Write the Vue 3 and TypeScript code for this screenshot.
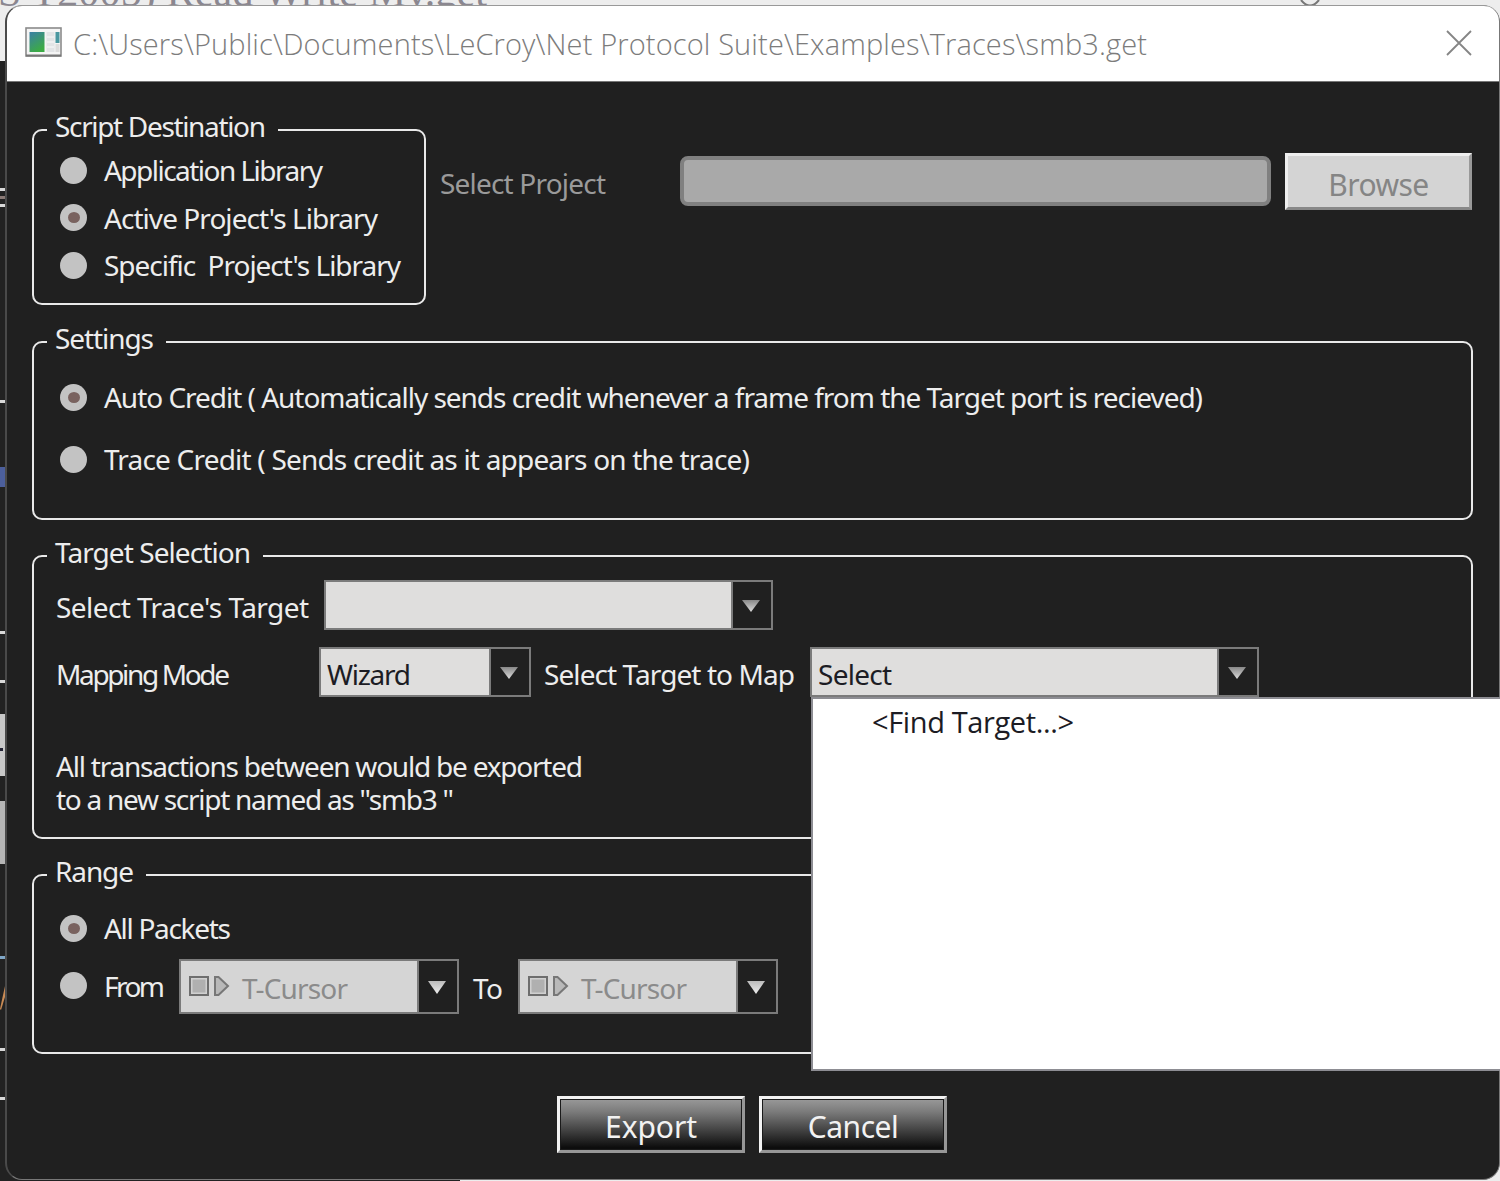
<script setup lang="ts">
import {ref, Ref} from "vue";

const title = 'C:\\Users\\Public\\Documents\\LeCroy\\Net Protocol Suite\\Examples\\Traces\\smb3.get'

const destinations = [
  {id: 'app', label: 'Application Library', width: 219},
  {id: 'active', label: "Active Project's Library", width: 274},
  {id: 'specific', label: "Specific  Project's Library", width: 297},
]

const credits = [
  {id: 'auto', label: 'Auto Credit ( Automatically sends credit whenever a frame from the Target port is recieved)', width: 1099},
  {id: 'trace', label: 'Trace Credit ( Sends credit as it appears on the trace)', width: 646},
]

const destination: Ref<string> = ref('active')
const credit: Ref<string> = ref('auto')
const range: Ref<string> = ref('all')

// spreads or tightens the letters until the text takes the given width
const vFit = {
  mounted(el: HTMLElement, binding: { value: number }) {
    const count = (el.textContent || '').length - 1
    const natural = el.getBoundingClientRect().width
    el.style.letterSpacing = (binding.value - natural) / count + 'px'
  }
}
</script>

<template>
  <div class="screen">
    <svg class="backdrop" width="1500" height="1181" viewBox="0 0 1500 1181">
      <rect width="1500" height="1181" fill="#ededed"/>
      <rect y="61" width="40" height="1120" fill="#222"/>
      <rect y="1150" width="460" height="31" fill="#222"/>
      <text x="-2" y="6" class="behind-title" textLength="489">S T2005) Read Write Mv.get</text>
      <path d="M1301 0 Q1310 11 1319 0" fill="none" stroke="#777" stroke-width="2"/>
      <g fill="#d8d8d8">
        <rect y="188" width="5" height="3"/>
        <rect y="196" width="5" height="3" fill="#8a7a76"/>
        <rect y="204" width="5" height="3"/>
        <rect y="400" width="5" height="3"/>
        <rect y="467" width="5" height="20" fill="#4c5f9c"/>
        <rect y="631" width="5" height="3"/>
        <rect y="680" width="5" height="3"/>
        <rect y="714" width="5" height="62" fill="#c8c8c8"/>
        <rect y="748" width="3" height="3" fill="#223"/>
        <rect y="801" width="5" height="63" fill="#b5b5b5"/>
        <rect y="956" width="5" height="3" fill="#7fa6c6"/>
        <path d="M0 1009 L5 986 V997 L1 1010 Z" fill="#c98b55"/>
        <rect y="1048" width="5" height="3"/>
        <rect y="1097" width="5" height="3"/>
      </g>
    </svg>

    <div class="dialog">
      <header class="titlebar">
        <svg class="app-icon" width="37" height="30" viewBox="0 0 37 30">
          <defs>
            <linearGradient id="pane" x1="0" y1="0" x2="0.5" y2="1">
              <stop offset="0" stop-color="#3a7fa6"/>
              <stop offset="1" stop-color="#3cab45"/>
            </linearGradient>
          </defs>
          <rect x="1" y="1" width="35" height="28" fill="#f5f5f5" stroke="#8b8b8b" stroke-width="1.6"/>
          <path d="M1 28.5 H36" stroke="#777" stroke-width="2"/>
          <rect x="4.500" y="5" width="15" height="20" fill="url(#pane)"/>
          <rect x="21.500" y="5" width="8" height="20" fill="#e2e4e6"/>
          <path d="M22 10 H29 M22 15 H29 M22 20 H29" stroke="#fafafa"/>
          <rect x="30.500" y="5" width="4" height="11" fill="#4a97a0"/>
          <rect x="30.500" y="17" width="4" height="8" fill="#dcdcdc"/>
        </svg>
        <span class="title"><span v-fit="1074" class="text">{{ title }}</span></span>
        <svg class="close" width="26" height="26" viewBox="0 0 26 26">
          <path d="M1 1 L25 25 M25 1 L1 25" stroke="#858585" stroke-width="1.8"/>
        </svg>
      </header>

      <main class="content">
        <div class="top-row">
          <fieldset class="group destination">
            <legend><span v-fit="211" class="text">Script Destination</span></legend>
            <label v-for="item in destinations" :key="item.id" class="option" @click="destination = item.id">
              <i class="radio" :class="{checked: destination === item.id}"></i>
              <span v-fit="item.width" class="text">{{ item.label }}</span>
            </label>
          </fieldset>
          <div class="project">
            <span class="project-label"><span v-fit="166" class="text">Select Project</span></span>
            <div class="project-field"></div>
            <button class="button disabled"><span v-fit="101" class="text">Browse</span></button>
          </div>
        </div>

        <fieldset class="group settings">
          <legend><span v-fit="99" class="text">Settings</span></legend>
          <label v-for="item in credits" :key="item.id" class="option" @click="credit = item.id">
            <i class="radio" :class="{checked: credit === item.id}"></i>
            <span v-fit="item.width" class="text">{{ item.label }}</span>
          </label>
        </fieldset>

        <fieldset class="group target">
          <legend><span v-fit="196" class="text">Target Selection</span></legend>
          <div class="row">
            <span class="name trace"><span v-fit="253" class="text">Select Trace's Target</span></span>
            <div class="combo wide">
              <div class="value"></div>
              <div class="arrow"></div>
            </div>
          </div>
          <div class="row mapping">
            <span class="name mode"><span v-fit="174" class="text">Mapping Mode</span></span>
            <div class="combo wizard">
              <div class="value"><span v-fit="84" class="text">Wizard</span></div>
              <div class="arrow"></div>
            </div>
            <span class="name map"><span v-fit="251" class="text">Select Target to Map</span></span>
            <div class="combo wide">
              <div class="value"><span v-fit="74" class="text">Select</span></div>
              <div class="arrow"></div>
              <div class="popup"><span v-fit="202" class="text">&lt;Find Target...&gt;</span></div>
            </div>
          </div>
          <div class="note">
            <div v-fit="527" class="text">All transactions between would be exported</div>
            <div v-fit="398" class="text">to a new script named as "smb3 "</div>
          </div>
        </fieldset>

        <fieldset class="group range">
          <legend><span v-fit="79" class="text">Range</span></legend>
          <label class="option" @click="range = 'all'">
            <i class="radio" :class="{checked: range === 'all'}"></i>
            <span v-fit="127" class="text">All Packets</span>
          </label>
          <div class="row">
            <label class="option from" @click="range = 'from'">
              <i class="radio" :class="{checked: range === 'from'}"></i>
              <span v-fit="61" class="text">From</span>
            </label>
            <template v-for="side in ['first', 'last']" :key="side">
              <span v-if="side === 'last'" class="to"><span v-fit="30" class="text">To</span></span>
              <div class="combo cursor" :class="side">
                <div class="value">
                  <svg class="cursor-icon" width="42" height="22" viewBox="0 0 42 22">
                    <rect x="1" y="2" width="18" height="18" fill="#d0d0d0" stroke="#6e6e6e" stroke-width="2"/>
                    <rect x="3.500" y="4.500" width="13" height="13" fill="#b0b0b0"/>
                    <path d="M26 2 H29.500 L39 11 L29.500 20 H26 Z" fill="#b9b9b9" stroke="#777" stroke-width="2"/>
                  </svg>
                  <span v-fit="106" class="text">T-Cursor</span>
                </div>
                <div class="arrow"></div>
              </div>
            </template>
          </div>
        </fieldset>

        <footer class="actions">
          <button class="button"><span v-fit="92" class="text">Export</span></button>
          <button class="button"><span v-fit="91" class="text">Cancel</span></button>
        </footer>
      </main>
    </div>
  </div>
</template>

<style>
body {
  overflow: hidden;
  background: #ededed;
}
</style>

<style scoped>
.screen {
  position: relative;
  box-sizing: border-box;
  width: 1500px;
  height: 1181px;
  padding: 5px 0 0 5px;
  overflow: hidden;
  font-family: "Noto Sans", "Open Sans", sans-serif;
  font-size: 28px;
  font-stretch: 92%;
  line-height: 32px;
  color: #ededed;
}
.backdrop {
  position: absolute;
  left: 0;
  top: 0;
}
.behind-title {
  font-family: "Liberation Serif", serif;
  font-size: 42px;
  fill: #8b8790;
}
.text {
  display: inline-block;
  white-space: pre;
}
.dialog {
  position: relative;
  box-sizing: border-box;
  width: 1495px;
  height: 1175px;
  border: 1px solid #777;
  border-top-color: #999;
  border-left: 2px solid #4a4a4a;
  border-radius: 17px;
  background: #202020;
}
.titlebar {
  display: flex;
  align-items: center;
  box-sizing: border-box;
  height: 76px;
  padding: 0 27px 0 18px;
  border-bottom: 1px solid #777;
  border-radius: 15px 15px 0 0;
  background: #fff;
}
.app-icon {
  margin-bottom: 4px;
}
.title {
  flex: 1;
  margin: 1px 0 0 11px;
  font-family: "Open Sans", "Noto Sans", sans-serif;
  font-weight: 300;
  font-size: 29px;
  color: #7c7c7c;
}
.close {
  margin-bottom: 1px;
}
.content {
  padding: 31px 26px 0 25px;
}
.group {
  box-sizing: border-box;
  min-width: 0;
  margin: 0;
  padding: 0 0 0 22px;
  border: 2px solid #e9e9e9;
  border-radius: 10px;
}
.group legend {
  height: 26px;
  margin-left: -9px;
  padding: 0 13px 8px 8px;
  line-height: 26px;
}
.top-row {
  display: flex;
  height: 192px;
}
.destination {
  width: 394px;
  height: 192px;
}
.option {
  display: flex;
  align-items: center;
  height: 47.5px;
  padding-left: 4px;
}
.destination .option:first-of-type {
  margin-top: -0.5px;
}
.radio {
  flex: none;
  display: flex;
  align-items: center;
  justify-content: center;
  width: 27px;
  height: 27px;
  margin-right: 17px;
  border-radius: 50%;
  background: #c3c3c3;
}
.radio.checked:after {
  content: "";
  width: 12px;
  height: 11px;
  border-radius: 50%;
  background: #79625f;
}
.project {
  display: flex;
  align-items: center;
  flex: 1;
  height: 57px;
  margin-top: 40px;
}
.project-label {
  width: 240px;
  margin-left: 14px;
  padding-top: 2px;
  color: #9a9a9a;
}
.project-field {
  box-sizing: border-box;
  width: 591px;
  height: 50px;
  margin-bottom: 1px;
  border: 4px solid #808080;
  border-radius: 8px;
  background: #a9a9a9;
}
.button {
  display: flex;
  align-items: center;
  justify-content: center;
  box-sizing: border-box;
  width: 188px;
  height: 57px;
  padding: 5px 0 0;
  border: 3px solid;
  border-color: #f2f2f2 #979797 #979797 #f2f2f2;
  background: linear-gradient(#999, #7b7b7b 25%, #0d0d0d 95%);
  box-shadow: inset 0 0 0 1px #1a1a1a;
  font-family: inherit;
  font-size: 30px;
  font-stretch: inherit;
  line-height: 32px;
  color: #f2f2f2;
}
.button.disabled {
  width: 187px;
  margin-left: 14px;
  padding-top: 6px;
  border-color: #eee #999 #888 #eee;
  background: #d4d4d4;
  box-shadow: none;
  color: #858585;
}
.settings {
  height: 195px;
  margin-top: 20px;
}
.settings .option {
  height: 62px;
}
.settings .option:first-of-type {
  margin-top: 7px;
}
.target {
  height: 300px;
  margin-top: 19px;
}
.row {
  display: flex;
  align-items: center;
}
.target .row {
  margin-top: 7px;
}
.target .row.mapping {
  margin-top: 17px;
}
.name {
  padding-top: 3px;
}
.trace {
  width: 268px;
}
.mode {
  width: 263px;
}
.map {
  width: 266px;
  margin-left: 13px;
}
.combo {
  position: relative;
  display: flex;
  box-sizing: border-box;
  height: 50px;
  border: 2px solid #7b7b7b;
  background: #202020;
}
.combo.wide {
  width: 449px;
}
.combo.wizard {
  width: 212px;
}
.combo .value {
  display: flex;
  align-items: center;
  flex: 1;
  padding: 3px 0 0 6px;
  background: #dfdedd;
  color: #1c1c24;
}
.combo .arrow {
  display: flex;
  align-items: center;
  justify-content: center;
  width: 38px;
  border-left: 2px solid #7b7b7b;
}
.combo .arrow:after {
  content: "";
  width: 18px;
  height: 12px;
  margin: 2px 2px 0 0;
  background: linear-gradient(#888, #ddd);
  clip-path: polygon(0 0, 100% 0, 50% 100%);
}
.popup {
  position: absolute;
  left: -1px;
  top: 48px;
  z-index: 2;
  box-sizing: border-box;
  width: 700px;
  height: 374px;
  padding: 7px 0 0 59px;
  border: 2px solid #8d8d93;
  background: #fff;
  font-family: "Open Sans", "Noto Sans", sans-serif;
  font-size: 29px;
  color: #1c1c24;
}
.note {
  display: flex;
  flex-direction: column;
  align-items: flex-start;
  margin-top: 53px;
  line-height: 32.5px;
}
.range {
  height: 196px;
  margin-top: 19px;
}
.range .option {
  height: 40px;
}
.range legend + .option {
  margin-top: 16px;
}
.range .row {
  margin-top: 11px;
}
.option.from {
  width: 119px;
  padding-bottom: 2px;
}
.combo.cursor {
  width: 260px;
  height: 55px;
}
.combo.cursor.first {
  width: 280px;
}
.cursor .value {
  padding: 3px 0 0 8px;
  background: #d5d5d5;
  color: #8b8b8b;
}
.cursor .arrow:after {
  height: 13px;
  background: linear-gradient(#bbb, #eee);
}
.cursor-icon {
  margin: 0 11px 4px 0;
}
.to {
  width: 45px;
  margin-left: 14px;
  padding-top: 3px;
}
.actions {
  display: flex;
  gap: 14px;
  margin: 42px 0 0 525px;
}
</style>
